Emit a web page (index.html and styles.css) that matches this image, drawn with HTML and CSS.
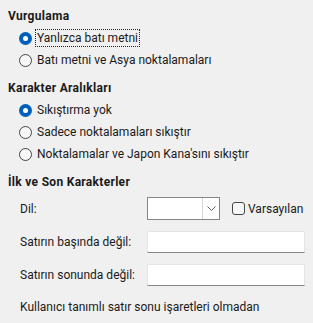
FILE: index.html
```html
<!DOCTYPE html>
<html lang="tr">
<head>
    <meta charset="UTF-8">
    <title>Asya Tipografisi</title>
    <link rel="stylesheet" href="styles.css">
</head>
<body>
    <div class="panel">
        <div class="group">
            <div class="group-title">Vurgulama</div>
            <label class="radio-row">
                <span class="radio checked"></span>
                <span class="radio-text focused">Yanlızca batı metni</span>
            </label>
            <label class="radio-row">
                <span class="radio"></span>
                <span class="radio-text">Batı metni ve Asya noktalamaları</span>
            </label>
        </div>

        <div class="group">
            <div class="group-title">Karakter Aralıkları</div>
            <label class="radio-row">
                <span class="radio checked"></span>
                <span class="radio-text">Sıkıştırma yok</span>
            </label>
            <label class="radio-row">
                <span class="radio"></span>
                <span class="radio-text">Sadece noktalamaları sıkıştır</span>
            </label>
            <label class="radio-row">
                <span class="radio"></span>
                <span class="radio-text">Noktalamalar ve Japon Kana'sını sıkıştır</span>
            </label>
        </div>

        <div class="group">
            <div class="group-title tight">İlk ve Son Karakterler</div>
            <div class="form-row">
                <span class="form-label">Dil:</span>
                <div class="combo">
                    <div class="combo-value"></div>
                    <div class="combo-button">
                        <svg width="9" height="5" viewBox="0 0 9 5"><path d="M0.5 0.5 L4.5 4.5 L8.5 0.5" fill="none" stroke="#606060" stroke-width="1"/></svg>
                    </div>
                </div>
                <label class="check-row">
                    <span class="checkbox"></span>
                    <span>Varsayılan</span>
                </label>
            </div>
            <div class="form-row">
                <span class="form-label">Satırın başında değil:</span>
                <div class="text-field"></div>
            </div>
            <div class="form-row">
                <span class="form-label">Satırın sonunda değil:</span>
                <div class="text-field"></div>
            </div>
            <div class="note">Kullanıcı tanımlı satır sonu işaretleri olmadan</div>
        </div>
    </div>
</body>
</html>
```

FILE: styles.css
```css
* {
    margin: 0;
    padding: 0;
    box-sizing: border-box;
}

body {
    font-family: Roboto, Lato, sans-serif;
    font-size: 12px;
    color: #1a1a1a;
    background: #f0f0f0;
    width: 313px;
    height: 323px;
    overflow: hidden;
}

.panel {
    padding: 8px 8px 0 8px;
}

.group {
    margin-bottom: 9px;
}

.group-title {
    font-weight: bold;
    letter-spacing: 0.3px;
    height: 16px;
    line-height: 16px;
    margin-bottom: 3px;
}

.group-title.tight {
    margin-bottom: 2px;
}

/* Radio buttons */
.radio-row {
    display: flex;
    align-items: center;
    height: 22px;
    padding-left: 11px;
}

.radio {
    width: 13px;
    height: 13px;
    border-radius: 50%;
    border: 1px solid #464646;
    background: #f7f7f7;
    flex-shrink: 0;
    margin-right: 5px;
    position: relative;
}

.radio.checked {
    border: none;
    background: #005fb8;
}

.radio.checked::after {
    content: '';
    position: absolute;
    left: 4px;
    top: 4px;
    width: 5px;
    height: 5px;
    border-radius: 50%;
    background: #fff;
}

.radio-text {
    padding: 0 1px;
    line-height: 16px;
    border: 1px solid transparent;
    margin-left: -2px;
}

.radio-text.focused {
    border: 1px dotted #222;
}

/* Form rows */
.form-row {
    display: flex;
    align-items: center;
    height: 33px;
    padding-left: 12px;
}

.form-label {
    width: 127px;
    flex-shrink: 0;
}

.combo {
    display: flex;
    width: 73px;
    height: 23px;
    border: 1px solid #868686;
    background: #fff;
}

.combo-value {
    flex: 1;
}

.combo-button {
    width: 17px;
    border-left: 1px solid #d6d6d6;
    display: flex;
    align-items: center;
    justify-content: center;
}

.check-row {
    display: flex;
    align-items: center;
    margin-left: 12px;
}

.checkbox {
    width: 13px;
    height: 13px;
    border: 1px solid #464646;
    border-radius: 3px;
    background: #f7f7f7;
    margin-right: 3px;
}

.text-field {
    width: 158px;
    height: 22px;
    background: #fff;
    border: 1px solid #e5e5e5;
    border-bottom: 1px solid #868686;
}

.note {
    padding-left: 12px;
    height: 32px;
    line-height: 32px;
}
```
